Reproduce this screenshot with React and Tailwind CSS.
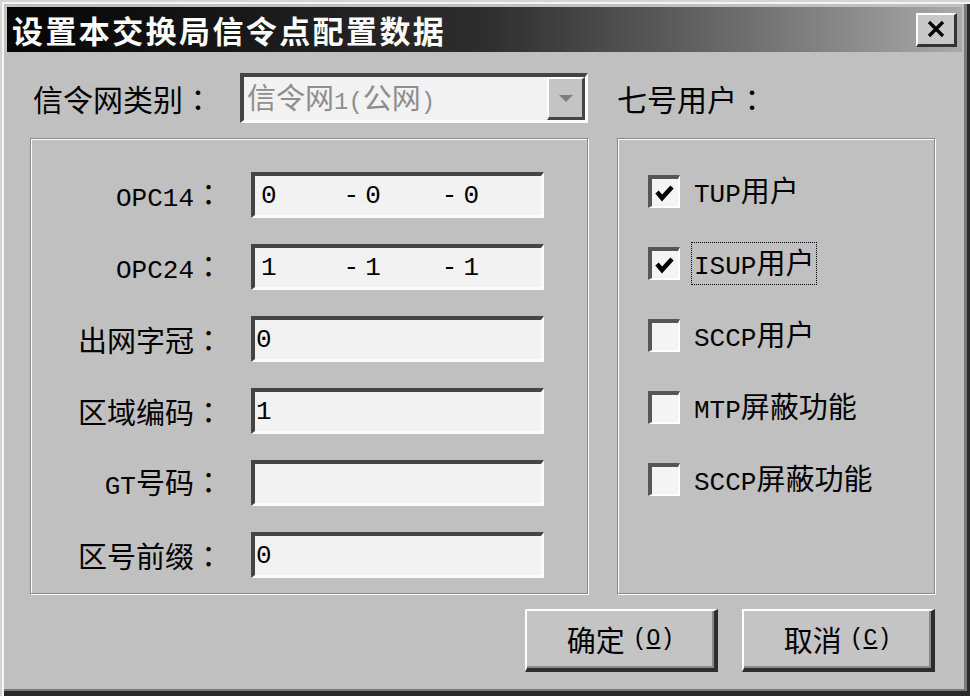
import React from "react";

// split a label into latin / cjk runs, like the old SimSun half-width look
const Txt = ({ s, lat = "text-[26px]", cjk = "text-[29px]" }) => {
  const parts = s.match(/[\x00-\x7f]+|：|[^\x00-\x7f：]+/g) || [];
  return parts.map((p, i) => {
    if (/[\x00-\x7f]/.test(p))
      return (
        <span key={i} className={`font-['Liberation_Mono',monospace] whitespace-pre ${lat}`}>
          {p}
        </span>
      );
    if (p === "：")
      return (
        <span key={i} className={`font-['Noto_Sans_CJK_JP',sans-serif] ${cjk}`}>
          {p}
        </span>
      );
    return (
      <span key={i} className={`font-['Noto_Sans_CJK_SC',sans-serif] ${cjk}`}>
        {p}
      </span>
    );
  });
};

const Field = ({ label, children }) => (
  <div className="flex items-center h-[46px]">
    <div className="w-[192px] text-right leading-none text-black">
      <Txt s={label} />
    </div>
    <div className="ml-[28px] w-[293px] h-[46px] flex items-center bg-[#f2f2f2] border-t-[4px] border-l-[4px] border-r-[3px] border-b-[3px] border-t-[#444] border-l-[#444] border-r-[#fbfbfb] border-b-[#fbfbfb] leading-none text-black">
      {children}
    </div>
  </div>
);

const Mono = ({ children, className = "" }) => (
  <span className={`font-['Liberation_Mono',monospace] text-[26px] ${className}`}>{children}</span>
);

const Check = ({ label, checked, focus }) => (
  <div className="flex items-center h-[33px]">
    <div className="w-[32px] h-[33px] bg-[#f4f4f4] border-t-[4px] border-l-[4px] border-r-[2px] border-b-[2px] border-t-[#555] border-l-[#555] border-r-white border-b-white flex items-center justify-center">
      {checked && (
        <svg width="20" height="18" viewBox="0 0 20 18">
          <path d="M2 8 L7 14 L17 3" fill="none" stroke="#000" strokeWidth="4.5" strokeLinejoin="miter" />
        </svg>
      )}
    </div>
    <div
      className={`ml-[11px] px-[2px] py-[4px] leading-none text-black ${
        focus ? "border border-dotted border-black" : "border border-transparent"
      }`}
    >
      <Txt s={label} />
    </div>
  </div>
);

const Button = ({ cjk, letter }) => (
  <button className="w-[193px] h-[63px] bg-[#c4c4c4] border-t-2 border-l-2 border-r-[4px] border-b-[4px] border-t-white border-l-white border-r-[#2e2e2e] border-b-[#2e2e2e] shadow-[inset_-2px_-2px_0_#8a8a8a] flex items-center justify-center leading-none text-black">
    <span className="font-['Noto_Sans_CJK_SC',sans-serif] text-[29px]">{cjk}</span>
    <span className="ml-[8px] font-['Liberation_Mono',monospace] text-[23px]">
      (<span className="underline">{letter}</span>)
    </span>
  </button>
);

export default function App() {
  return (
    <div className="w-[970px] h-[696px] bg-[#c0c0c0] flex flex-col pt-[7px] pl-[7px] pr-[8px] shadow-[inset_2px_2px_0_#d4d4d4,inset_4px_4px_0_#f4f4f4,inset_-3px_-5px_0_#2a2a2a,inset_-6px_-7px_0_#7a7a7a] overflow-hidden">
      {/* Title bar */}
      <div className="h-[45px] flex items-center bg-linear-to-r from-[#060606] via-[#2e2e2e] to-[#aaaaaa] pl-[5px] pr-[5px]">
        <div className="flex-1 font-['Noto_Sans_CJK_SC',sans-serif] font-bold text-[31px] tracking-[2.4px] text-white leading-none">
          设置本交换局信令点配置数据
        </div>
        <div className="w-[41px] h-[34px] bg-[#c8c8c8] border-t-2 border-l-2 border-r-[3px] border-b-[3px] border-t-white border-l-white border-r-[#333] border-b-[#333] flex items-center justify-center">
          <svg width="20" height="18" viewBox="0 0 20 18">
            <path d="M3 2 L17 16 M17 2 L3 16" stroke="#000" strokeWidth="3.2" />
          </svg>
        </div>
      </div>

      {/* Body */}
      <div className="flex flex-col pl-[23px] pr-[27px]">
        {/* network type row */}
        <div className="mt-[21px] h-[50px] flex items-center">
          <div className="w-[210px] pl-[3px] leading-none text-black">
            <Txt s="信令网类别：" cjk="text-[30px]" />
          </div>
          <div className="w-[348px] h-[50px] flex items-center bg-[#f2f2f2] border-t-[4px] border-l-[4px] border-r-[3px] border-b-[3px] border-t-[#444] border-l-[#444] border-r-[#fbfbfb] border-b-[#fbfbfb]">
            <div className="flex-1 pl-[3px] leading-none text-[#8e8e8e]">
              <Txt s="信令网1(公网)" lat="text-[24px]" />
            </div>
            <div className="w-[38px] h-[43px] bg-[#c4c4c4] border-t-2 border-l-2 border-r-[3px] border-b-[3px] border-t-white border-l-white border-r-[#444] border-b-[#444] flex items-center justify-center">
              <svg width="16" height="9" viewBox="0 0 16 9">
                <path d="M1 1 L15 1 L8 8 Z" fill="#7d7d7d" />
              </svg>
            </div>
          </div>
          <div className="ml-[29px] leading-none text-black">
            <Txt s="七号用户：" cjk="text-[30px]" />
          </div>
        </div>

        {/* group boxes */}
        <div className="mt-[15px] h-[456px] flex gap-[29px]">
          <div className="w-[558px] border border-[#8a8a8a] shadow-[inset_1px_1px_0_#fff,1px_1px_0_#fff] flex flex-col gap-[26px] pt-[33px]">
            <Field label="OPC14：">
              <div className="flex pl-[6px]">
                <Mono>0</Mono>
                <Mono className="ml-[67px]">-</Mono>
                <Mono className="ml-[6px]">0</Mono>
                <Mono className="ml-[61px]">-</Mono>
                <Mono className="ml-[6px]">0</Mono>
              </div>
            </Field>
            <Field label="OPC24：">
              <div className="flex pl-[6px]">
                <Mono>1</Mono>
                <Mono className="ml-[67px]">-</Mono>
                <Mono className="ml-[6px]">1</Mono>
                <Mono className="ml-[61px]">-</Mono>
                <Mono className="ml-[6px]">1</Mono>
              </div>
            </Field>
            <Field label="出网字冠：">
              <Mono className="pl-[1px]">0</Mono>
            </Field>
            <Field label="区域编码：">
              <Mono className="pl-[1px]">1</Mono>
            </Field>
            <Field label="GT号码：" />
            <Field label="区号前缀：">
              <Mono className="pl-[1px]">0</Mono>
            </Field>
          </div>

          <div className="w-[318px] border border-[#8a8a8a] shadow-[inset_1px_1px_0_#fff,1px_1px_0_#fff] flex flex-col gap-[39px] pt-[36px] pl-[30px]">
            <Check label="TUP用户" checked />
            <Check label="ISUP用户" checked focus />
            <Check label="SCCP用户" />
            <Check label="MTP屏蔽功能" />
            <Check label="SCCP屏蔽功能" />
          </div>
        </div>

        {/* buttons */}
        <div className="mt-[15px] flex justify-end gap-[24px]">
          <Button cjk="确定" letter="O" />
          <Button cjk="取消" letter="C" />
        </div>
      </div>
    </div>
  );
}
